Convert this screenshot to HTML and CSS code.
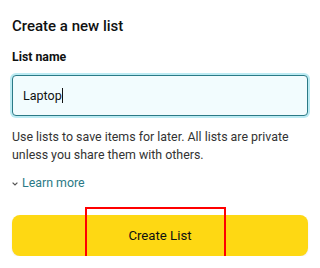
FILE: index.html
```html
<!DOCTYPE html>
<html>
<head>
<meta charset="utf-8">
<link rel="stylesheet" href="styles.css">
</head>
<body>
<div class="page">
  <h1 class="title">Create a new list</h1>
  <label class="label">List name</label>
  <div class="input"><span class="value">Laptop</span><span class="caret"></span></div>
  <p class="desc">Use lists to save items for later. All lists are private unless you share them with others.</p>
  <div class="learn"><svg class="chev" width="6" height="4" viewBox="0 0 6 4"><path d="M0.6 0.6 L3 3 L5.4 0.6" fill="none" stroke="#555" stroke-width="1.2"/></svg><span>Learn more</span></div>
  <div class="btnwrap">
    <div class="btn">Create List</div>
    <div class="highlight"></div>
  </div>
</div>
</body>
</html>
```

FILE: styles.css
```css
html, body { margin: 0; padding: 0; background: #fff; }
body { font-family: Roboto, "Noto Sans", sans-serif; color: #0f1111; }
.page { padding: 15px 12px 0 12px; display: flex; flex-direction: column; }
.title { margin: 0; font-size: 15px; font-weight: 500; line-height: 22px; }
.label { margin-top: 11px; font-size: 12.3px; font-weight: 700; line-height: 18px; }
.input { margin-top: 9px; height: 41px; box-sizing: border-box; border: 1px solid #2b7a86; border-radius: 4px; background: #f2fcfe; box-shadow: 0 0 0 2px #bcebf3; display: flex; align-items: center; padding-left: 10px; font-size: 12.5px; }
.caret { width: 1px; height: 15px; background: #111; }
.desc { margin: 12px 0 0 0; font-size: 12.4px; line-height: 18px; color: #333; }
.learn { margin-top: 10px; display: flex; align-items: center; gap: 4px; font-size: 12.4px; color: #2b7a86; line-height: 18px; }
.chev { margin-top: 1px; }
.btnwrap { position: relative; margin-top: 23px; }
.btn { height: 41px; border-radius: 8px; background: #fed813; display: flex; align-items: center; justify-content: center; font-size: 13.2px; color: #0f1111; box-shadow: 0 1px 2px rgba(0,0,0,0.08); }
.highlight { position: absolute; left: 73px; top: -8px; width: 141px; height: 52px; box-sizing: border-box; border: 2px solid #ff0000; }
```
